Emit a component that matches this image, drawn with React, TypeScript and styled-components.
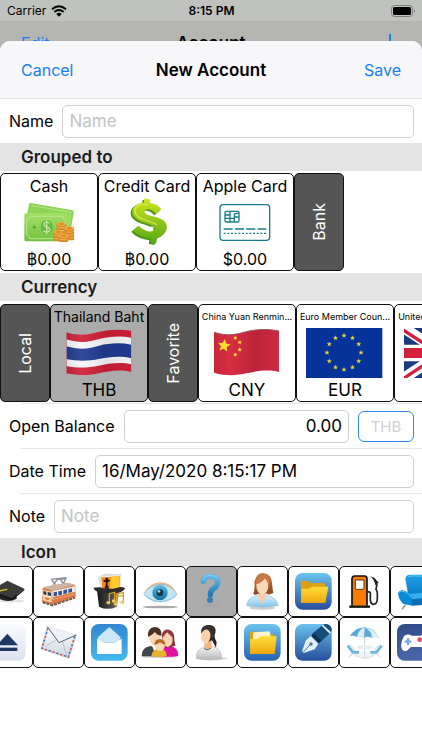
import React from "react";
import styled, { createGlobalStyle } from "styled-components";

const GlobalStyle = createGlobalStyle`
  * { box-sizing: border-box; }
  body { margin: 0; background: #fff; overflow-x: hidden; }
  body, button, input { font-family: Inter, "Liberation Sans", sans-serif; color: #000; }
  button { padding: 0; cursor: pointer; }
`;

const Screen = styled.main`
  display: flex;
  flex-direction: column;
  min-height: 100vh;
  overflow: hidden;
  background: #b4b5b1;
  font-size: 16px;
`;

const StatusBar = styled.div`
  display: grid;
  grid-template-columns: 1fr auto 1fr;
  align-items: center;
  height: 21px;
  padding: 0 6px 0 7px;
  background: #c0c2bf;
  font-size: 12px;
`;

const Carrier = styled.span`
  display: flex;
  align-items: center;
  gap: 5px;
`;

const Clock = styled.span`
  font-weight: 600;
`;

const Battery = styled.svg`
  justify-self: end;
`;

const Bar = styled.header<{ $height: number }>`
  display: grid;
  grid-template-columns: 1fr auto 1fr;
  align-items: center;
  flex: none;
  height: ${(p) => p.$height}px;
  padding: 0 21px;
`;

const BarTitle = styled.h1`
  margin: 0;
  font-size: 17px;
  font-weight: 600;
`;

const BarButton = styled.button<{ $end?: boolean }>`
  justify-self: ${(p) => (p.$end ? "end" : "start")};
  display: flex;
  border: 0;
  background: none;
  color: #157efb;
  font-size: 16px;
`;

const Sheet = styled.section`
  position: relative;
  flex: 1;
  margin-top: -24px;
  border-radius: 10px 10px 0 0;
  overflow: hidden;
  background: #fff;
`;

const SheetTop = styled.div`
  background: #f7f6f8;
  border-bottom: 1px solid #e3e2e4;
`;

const SectionTitle = styled.h2`
  display: flex;
  align-items: center;
  height: 28px;
  margin: 0;
  padding: 0 21px;
  background: #e4e4e4;
  color: #1c1c1c;
  font-size: 17px;
  font-weight: 600;
`;

const Row = styled.div`
  display: flex;
  align-items: center;
  gap: 9px;
  height: 44px;
  padding: 0 8px 0 9px;
`;

const Divider = styled.hr`
  height: 1px;
  margin: 0 0 0 21px;
  border: 0;
  background: #e6e6e6;
`;

const Field = styled.input<{ $right?: boolean }>`
  flex: 1;
  min-width: 0;
  height: 33px;
  padding: 0 6px 1px;
  border: 1px solid #cfcfcf;
  border-radius: 5px;
  background: #fff;
  font-size: 17px;
  text-align: ${(p) => (p.$right ? "right" : "left")};
  &::placeholder { color: #c4c4c6; opacity: 1; }
`;

const UnitButton = styled.button`
  width: 56px;
  height: 31px;
  border: 1px solid #2f88f3;
  border-radius: 6px;
  background: #fff;
  color: #d2d2d4;
  font-size: 15px;
`;

const Strip = styled.div`
  display: flex;
  padding: 2px 0;
  overflow: hidden;
`;

const CurrencyStrip = styled(Strip)`
  padding: 3px 0 1px;
`;

const CardBox = styled.button<{ $selected?: boolean }>`
  display: grid;
  grid-template-rows: 23px 50px 23px;
  align-items: center;
  justify-items: center;
  flex: none;
  width: 98px;
  border: 1px solid #111;
  border-radius: 5px;
  background: ${(p) => (p.$selected ? "#ababab" : "#fff")};
`;

const CardName = styled.span<{ $size: number }>`
  font-size: ${(p) => p.$size}px;
  white-space: nowrap;
`;

const CardValue = styled.span<{ $code?: boolean }>`
  font-size: ${(p) => (p.$code ? 17 : 16)}px;
`;

const GroupTab = styled.button`
  display: flex;
  align-items: center;
  justify-content: center;
  flex: none;
  width: 50px;
  border: 1px solid #111;
  border-radius: 5px;
  background: #555;
  color: #fff;
  font-size: 16px;
`;

const Upright = styled.span`
  writing-mode: vertical-rl;
  transform: rotate(180deg);
`;

const IconGrid = styled.div`
  display: grid;
  grid-template-columns: repeat(9, 51px);
  margin-left: -18px;
`;

const IconCell = styled.button<{ $selected?: boolean }>`
  display: flex;
  height: 51px;
  border: 1px solid #111;
  border-radius: 5px;
  background: ${(p) => (p.$selected ? "#ababab" : "#fff")};
`;

const Art = ({ children }: { children: React.ReactNode }) => (
  <svg width="96" height="50" viewBox="0 0 288 150" aria-hidden="true">{children}</svg>
);

type GradProps = { id: string; from: string; to: string; flat?: boolean };
const Grad = ({ id, from, to, flat }: GradProps) => (
  <linearGradient id={id} x1="0" y1="0" x2={flat ? 1 : 0} y2={flat ? 0 : 1}>
    <stop offset="0" stopColor={from} />
    <stop offset="1" stopColor={to} />
  </linearGradient>
);

const starPoints = (cx: number, cy: number, r: number, turn = 0) =>
  Array.from({ length: 10 }, (_, i) => {
    const a = ((i * 36 - 90 + turn) * Math.PI) / 180;
    const d = i % 2 ? r * 0.45 : r;
    return `${(cx + d * Math.cos(a)).toFixed(1)},${(cy + d * Math.sin(a)).toFixed(1)}`;
  }).join(" ");

const Coins = ({ x, y, n }: { x: number; y: number; n: number }) => (
  <g>
    {Array.from({ length: n }, (_, i) => (
      <g key={i}>
        <rect x={x - 15} y={y - i * 9} width="30" height="10" rx="5" fill="#d98427" />
        <path d={`M${x - 11} ${y + 3 - i * 9}h22`} stroke="#f2b65c" strokeWidth="3" />
      </g>
    ))}
    <ellipse cx={x} cy={y + 1 - (n - 1) * 9} rx="14" ry="6" fill="#f0a942" />
    <ellipse cx={x} cy={y + 1 - (n - 1) * 9} rx="8" ry="3" fill="#dc8524" />
  </g>
);

const CashArt = () => (
  <Art>
    <defs><Grad id="note" from="#a5df68" to="#72c13f" /></defs>
    <path d="M85 19Q88 17 93 19L216 40Q219 42 218 47L206 116L70 90Z" fill="#8ed456" />
    <path d="M92 26L209 46L199 102" fill="none" stroke="#b4e585" strokeWidth="3" />
    <rect x="70" y="49" width="131" height="84" rx="5" fill="url(#note)" />
    <path d="M86 58H186Q186 68 194 69V113Q186 114 185 125H86Q85 114 77 113V69Q86 68 86 58Z" fill="none" stroke="#b9e68f" strokeWidth="3" />
    <ellipse cx="137" cy="90" rx="18" ry="21" fill="#67b83f" />
    <path d="M146 79Q138 72 130 78Q125 86 137 90Q151 94 144 103Q136 108 127 101M137 69V111" fill="none" stroke="#c4e8a0" strokeWidth="4" />
    <path d="M100 85l6 6-6 6-6-6z" fill="#5ba536" />
    <Coins x={181} y={107} n={4} />
    <Coins x={172} y={122} n={3} />
    <Coins x={205} y={120} n={4} />
    <Coins x={187} y={125} n={2} />
  </Art>
);

const DollarArt = () => (
  <Art>
    <defs><Grad id="dollar" from="#cfe51b" to="#55a914" /></defs>
    {[{ dx: -5, dy: 4, c: "#4b9416" }, { dx: 0, dy: 0, c: "url(#dollar)" }].map((l) => (
      <path
        key={l.dx}
        transform={`translate(${l.dx} ${l.dy})`}
        fill={l.c}
        d="M136 4L154 8L152 18C169 20 183 28 187 37L171 51C164 42 155 37 147 37C138 37 134 42 138 48C146 59 188 58 200 77C211 98 194 118 175 121L171 140L154 136L156 125C132 123 112 113 102 100L119 86C131 98 147 105 157 103C169 101 172 93 164 88C148 78 108 75 101 51C96 31 112 18 134 17Z"
      />
    ))}
    <path d="M146 23C126 17 108 28 108 43C111 68 145 66 174 83" fill="none" stroke="#e4f067" strokeWidth="4" opacity=".7" />
    <path d="M143 38L148 53L139 49ZM155 87L166 91L159 102Z" fill="#fff" opacity=".8" />
  </Art>
);

const ChipCardArt = () => (
  <Art>
    <g fill="none" stroke="#187d89" strokeWidth="4">
      <rect x="69" y="23" width="149" height="107" rx="10" />
      <g strokeWidth="4">
        <rect x="84" y="43" width="42" height="32" rx="4" />
        <path d="M84 54H99M84 64H99M99 43V75M112 75V54Q112 49 118 49H126M112 60H126M99 64H112" />
      </g>
      <path d="M80 96H208" strokeDasharray="27 7" />
      <path d="M80 109H208" strokeDasharray="6 5" />
    </g>
  </Art>
);

const ThaiFlag = () => (
  <Art>
    <defs>
      <clipPath id="thai"><path d="M46 13C92 27 118 18 145 11S207 3 241 8V132C207 123 169 130 143 136S85 144 46 136Z" /></clipPath>
      <linearGradient id="fold">
        <stop offset="0" stopColor="#000" stopOpacity=".12" />
        <stop offset=".25" stopColor="#fff" stopOpacity=".08" />
        <stop offset=".6" stopColor="#000" stopOpacity=".08" />
        <stop offset="1" stopColor="#000" stopOpacity=".03" />
      </linearGradient>
    </defs>
    <g clipPath="url(#thai)">
      <rect x="40" width="210" height="150" fill="#cf1f36" />
      <path d="M46 34C92 48 118 40 145 33S207 23 241 29V109C207 101 169 108 143 113S85 122 46 114Z" fill="#f7f7f9" />
      <path d="M46 55C92 68 118 60 145 53S207 43 241 50V91C207 82 169 88 143 93S85 101 46 93Z" fill="#203b91" />
      <rect x="40" width="210" height="150" fill="url(#fold)" />
    </g>
  </Art>
);

const ChinaFlag = () => (
  <Art>
    <defs>
      <linearGradient id="china">
        <stop offset="0" stopColor="#cb2638" />
        <stop offset=".25" stopColor="#d62f43" />
        <stop offset=".65" stopColor="#bd2339" />
        <stop offset="1" stopColor="#d02942" />
      </linearGradient>
    </defs>
    <path d="M45 13C90 27 115 18 142 11S205 2 240 9V132C205 123 169 130 142 136S84 145 45 134Z" fill="url(#china)" />
    <path d="M45 13C90 27 115 18 142 11S205 2 240 9" fill="none" stroke="#96545c" strokeWidth="3" />
    <g fill="#fde12d">
      <polygon points={starPoints(75, 53, 20, 8)} />
      <polygon points={starPoints(109, 30, 7, 20)} />
      <polygon points={starPoints(122, 43, 7, 10)} />
      <polygon points={starPoints(122, 65, 7)} />
      <polygon points={starPoints(109, 80, 7, 15)} />
    </g>
  </Art>
);

const EuroFlag = () => (
  <Art>
    <rect x="27" width="229" height="150" fill="#053399" />
    {Array.from({ length: 12 }, (_, i) => (
      <polygon
        key={i}
        fill="#e6ce3e"
        points={starPoints(141 + 51 * Math.sin((i * Math.PI) / 6), 74 - 51 * Math.cos((i * Math.PI) / 6), 8)}
      />
    ))}
  </Art>
);

const BritishFlag = () => (
  <Art>
    <svg x="27" y="0" width="229" height="150" viewBox="0 0 229 150">
      <rect width="229" height="150" fill="#1b3a83" />
      <path d="M0 0L229 150M0 150L229 0" stroke="#fff" strokeWidth="32" />
      <path d="M-4 5L115 83M115 75L233 153M-4 153L115 75M115 67L233 -11" stroke="#d31f3b" strokeWidth="10" />
      <path d="M114 0V150M0 75H229" stroke="#fff" strokeWidth="50" />
      <path d="M114 0V150M0 75H229" stroke="#d31f3b" strokeWidth="30" />
    </svg>
  </Art>
);

const Tile = ({ id, from, to }: { id: string; from: string; to: string }) => (
  <>
    <defs><Grad id={id} from={from} to={to} /></defs>
    <rect x="21" y="21" width="110" height="110" rx="23" fill={`url(#${id})`} />
  </>
);

const GraduationCap = () => (
  <>
    <ellipse cx="88" cy="105" rx="38" ry="5" fill="#e4e4e4" />
    <path d="M50 78V98Q78 112 104 98V78Z" fill="#252525" />
    <path d="M76 44L127 68L90 97L24 74Z" fill="#3b3b3b" />
    <path d="M24 74L90 97L127 68V73L90 103L24 79Z" fill="#151515" />
    <path d="M76 70L44 76L38 92" fill="none" stroke="#d3c12b" strokeWidth="4" />
  </>
);

const Train = () => (
  <>
    <path d="M56 42L68 56M60 56L74 40L98 38L92 52M54 40L100 35M82 40L92 54" fill="none" stroke="#8a8f95" strokeWidth="4" />
    <path d="M28 70Q29 64 38 62L104 50L124 56Q129 60 128 66V94L58 117L27 108Z" fill="#dc7b45" />
    <path d="M32 65L40 61L104 50L124 57L58 74Z" fill="#cdb5a6" />
    <path d="M58 75L128 60V84L58 101Z" fill="#f1e8e2" />
    <path d="M62 79L72 77V89L62 91ZM76 76L87 74V86L76 88ZM91 73L102 70V82L91 85ZM106 70L117 67V78L106 81Z" fill="#3454a0" />
    <path d="M60 97L127 80" stroke="#e07a3e" strokeWidth="6" />
    <path d="M28 72L56 77V98L27 91Z" fill="#f6dfc5" />
    <path d="M31 75L40 77V87L31 85ZM44 78L54 80V90L44 88Z" fill="#30384f" />
    <path d="M28 100L57 107" fill="none" stroke="#f6e3cf" strokeWidth="4" />
    <path d="M29 109L58 118L126 95" fill="none" stroke="#6b5a52" strokeWidth="6" strokeDasharray="9 3" />
    <circle cx="33" cy="96" r="3" fill="#fff3a2" />
    <circle cx="51" cy="101" r="3" fill="#fff3a2" />
  </>
);

const MagicHat = () => (
  <>
    <defs><Grad id="hat" from="#171717" to="#686868" flat /></defs>
    <path d="M42 34L62 23L112 24L110 60L50 70Z" fill="#d5dbe0" />
    <path d="M50 33L109 29L108 68L54 72Z" fill="#f08a12" stroke="#f4efe6" strokeWidth="3" />
    <path d="M80 33L106 31V66H78Z" fill="#ffcb2c" />
    <path d="M59 43Q67 50 77 42M68 42V60M63 72L68 56L74 72" stroke="#241109" strokeWidth="5" fill="none" />
    <circle cx="68" cy="39" r="4" fill="#241109" />
    <path d="M39 73L45 122Q72 135 98 122L105 73Z" fill="url(#hat)" />
    <path d="M28 65Q50 62 56 66Q76 72 100 65Q112 61 123 66Q120 82 74 84Q31 81 28 65Z" fill="#2b2b2b" />
    <path d="M76 109V83L92 79V104M98 113V84L118 80V108M98 92L118 88" fill="none" stroke="#d9a127" strokeWidth="4" />
    <g fill="#f1c65c"><ellipse cx="73" cy="110" rx="6" ry="5" /><ellipse cx="89" cy="105" rx="6" ry="5" /><ellipse cx="95" cy="114" rx="6" ry="5" /><ellipse cx="115" cy="109" rx="6" ry="5" /></g>
  </>
);

const Eye = () => (
  <>
    <defs><Grad id="lens" from="#5dbde5" to="#126e9f" /></defs>
    <ellipse cx="76" cy="123" rx="53" ry="4" fill="#a9a9a9" />
    <path d="M25 82Q50 45 80 49Q111 51 126 84Q102 55 76 57Q47 57 25 82Z" fill="#e9b98b" />
    <path d="M26 83Q45 56 77 55Q109 56 126 85Q106 107 76 107Q44 106 26 83Z" fill="#c3e4f1" />
    <path d="M26 83Q45 56 77 55Q109 56 126 85" fill="none" stroke="#8fa9b0" strokeWidth="2" />
    <path d="M28 85Q46 106 76 107Q107 106 125 86" fill="none" stroke="#8cc7dc" strokeWidth="4" />
    <circle cx="75" cy="80" r="23" fill="url(#lens)" />
    <circle cx="75" cy="80" r="10" fill="#103849" />
    <circle cx="72" cy="76" r="4" fill="#8ed8f1" />
  </>
);

const Question = () => (
  <>
    <defs><Grad id="question" from="#65b9e9" to="#2778b5" /></defs>
    <ellipse cx="75" cy="118" rx="28" ry="3" fill="#a1a3a5" />
    <path d="M52 47Q54 31 73 31Q96 31 95 50Q94 61 82 68Q73 74 73 86" fill="none" stroke="url(#question)" strokeWidth="16" strokeLinecap="round" />
    <path d="M50 43Q57 28 73 28Q88 27 95 40" fill="none" stroke="#86cff3" strokeWidth="3" />
    <circle cx="72" cy="102" r="9" fill="#347fb8" />
  </>
);

const Woman = () => (
  <>
    <defs><Grad id="blouse" from="#d7f1fc" to="#86c4e9" /><Grad id="bob" from="#c87843" to="#8b4522" /></defs>
    <ellipse cx="76" cy="126" rx="38" ry="5" fill="#ccc" />
    <path d="M29 119Q31 95 58 89L76 97L95 89Q120 96 123 119Q76 127 29 119Z" fill="url(#blouse)" stroke="#8bbddd" strokeWidth="2" />
    <path d="M65 78H88V93L77 115L62 92Z" fill="#f7cda7" />
    <path d="M49 84Q55 65 52 49Q58 21 78 21Q104 23 105 52Q107 72 109 81Q92 89 88 82L64 83Q55 89 49 84Z" fill="url(#bob)" />
    <ellipse cx="76" cy="60" rx="18" ry="25" fill="#fad9b7" />
    <path d="M55 55Q72 53 85 36Q91 51 98 56Q102 26 77 25Q55 28 55 55Z" fill="#c97b47" />
  </>
);

const Folder = ({ paper }: { paper?: boolean }) => {
  const id = paper ? "folderB" : "folderA";
  return (
    <>
      <Tile id={id} from={paper ? "#6cc2ec" : "#6cc4ef"} to={paper ? "#2862b4" : "#294f9b"} />
      <defs><Grad id={`${id}y`} from="#ffdc37" to="#eea811" /></defs>
      <path d="M38 48Q38 44 43 44H60L67 51H107Q112 51 112 57V110H40Z" fill="#dea012" />
      {paper && <path d="M49 46L98 43L104 76H47Z" fill="#fff0cf" />}
      <path d={paper ? "M39 66H61L70 58H119L113 111H39Z" : "M41 68H63L72 62H121L112 110H38Z"} fill={`url(#${id}y)`} />
    </>
  );
};

const FuelPump = () => (
  <>
    <path d="M39 119V38Q40 30 47 30H77Q84 30 84 38V119" fill="#f57c05" stroke="#17120d" strokeWidth="5" />
    <path d="M31 122H93" stroke="#17120d" strokeWidth="7" />
    <rect x="49" y="42" width="26" height="28" rx="3" fill="#fff" stroke="#4d341d" strokeWidth="3" />
    <path d="M86 78Q97 75 94 90Q92 113 102 115Q115 116 115 97V82Q115 76 111 70L114 54" fill="none" stroke="#202020" strokeWidth="5" />
    <path d="M94 31L106 35L119 50L109 58Q107 42 94 31Z" fill="#202020" />
  </>
);

const Sofa = () => (
  <>
    <defs><Grad id="sofa" from="#1f9fe6" to="#0b78c6" /></defs>
    <path d="M46 117L36 130M118 117L124 130" stroke="#999" strokeWidth="5" />
    <path d="M46 38Q48 26 60 26H108Q120 28 121 41L124 95H56Z" fill="url(#sofa)" />
    <path d="M56 84L120 78L128 98L66 110Z" fill="#37aeee" />
    <path d="M24 80Q30 68 46 75Q62 82 66 94L68 119L40 114Q25 100 24 80Z" fill="#0a8bd8" />
    <path d="M65 100L134 92V114L66 119Z" fill="#0b6db5" />
    <path d="M26 80Q33 71 46 78Q60 84 63 94M54 32Q60 28 107 31" fill="none" stroke="#66c8f6" strokeWidth="3" />
  </>
);

const Eject = () => (
  <>
    <Tile id="eject" from="#fafbff" to="#dbe1ee" />
    <path d="M76 50L108 85H44Z" fill="#203763" />
    <path d="M46 97H106" stroke="#203763" strokeWidth="10" />
  </>
);

const AirMail = () => (
  <>
    <defs><Grad id="mail" from="#fff" to="#cdd6e0" /></defs>
    <path d="M43 29L130 54L108 124L24 96Z" fill="url(#mail)" stroke="#c3c9cf" strokeWidth="2" />
    <path d="M45 33L27 94L106 120L126 56" fill="none" stroke="#cf5f5f" strokeWidth="5" strokeDasharray="8 16" />
    <path d="M45 33L27 94L106 120L126 56" fill="none" stroke="#4980b7" strokeWidth="5" strokeDasharray="8 16" strokeDashoffset="12" />
    <path d="M34 90L68 70M100 113L88 72" fill="none" stroke="#a6adb4" strokeWidth="2" />
    <path d="M43 29L130 54L78 77Z" fill="#edf1f5" />
    <path d="M43 29L78 77L130 54" fill="none" stroke="#59616a" strokeWidth="3" />
  </>
);

const OpenMail = () => (
  <>
    <Tile id="openmail" from="#3386cf" to="#43b9ed" />
    <path d="M76 30L110 61Q110 67 103 71L87 77H65L48 71Q39 66 42 60Z" fill="#cbe7f8" />
    <path d="M39 65L62 77H90L113 65V111H39Z" fill="#fff" />
  </>
);

const Family = () => (
  <>
    <ellipse cx="75" cy="119" rx="54" ry="4" fill="#ccc" />
    <path d="M20 118Q19 91 46 87L70 92L74 118Z" fill="#41464c" />
    <path d="M51 86L62 113L68 88Z" fill="#fff" />
    <path d="M77 118L80 91L107 87Q130 92 130 116Q104 122 77 118Z" fill="#dc149e" />
    <path d="M75 87Q87 65 80 54Q86 36 101 38Q120 42 118 70L121 86Q92 96 75 87Z" fill="#852b38" />
    <ellipse cx="60" cy="60" rx="17" ry="25" fill="#f8d5b2" />
    <path d="M39 60Q36 34 58 30Q82 30 79 56Q64 54 60 45Q50 55 39 60Z" fill="#4b3025" />
    <ellipse cx="98" cy="68" rx="15" ry="22" fill="#f9d5b4" />
    <path d="M80 63Q88 57 96 45Q107 58 116 62Q112 38 97 39Q82 42 80 63Z" fill="#933840" />
    <path d="M49 117Q51 97 75 94Q97 99 95 118Q72 123 49 117Z" fill="#e6b22b" />
    <ellipse cx="75" cy="85" rx="15" ry="17" fill="#fad9b9" />
    <path d="M58 84Q59 66 75 66Q92 68 91 85Q78 79 75 76Q67 83 58 84Z" fill="#b36b23" />
  </>
);

const Ponytail = () => (
  <>
    <defs><Grad id="shirt" from="#f4f4f4" to="#b7b7b7" /></defs>
    <ellipse cx="82" cy="124" rx="42" ry="6" fill="#ddd" />
    <path d="M31 125Q29 95 55 91L81 89Q108 95 107 125Q69 133 31 125Z" fill="url(#shirt)" stroke="#bbb" strokeWidth="2" />
    <path d="M55 79L77 70V93Q62 104 54 90Z" fill="#eeb886" />
    <path d="M48 42Q52 22 73 24Q93 29 88 48Q82 59 92 75L90 92Q84 82 78 70L59 78Z" fill="#282626" />
    <path d="M46 54Q48 36 65 37Q80 41 73 62Q68 80 57 80Q42 74 46 54Z" fill="#f9d1aa" />
    <path d="M45 50Q44 25 65 24Q88 25 83 60L73 67Q77 42 61 36Q50 40 45 50Z" fill="#353131" />
    <path d="M54 93Q60 103 74 94" stroke="#555" strokeWidth="3" fill="none" />
  </>
);

const Pen = () => (
  <>
    <Tile id="pen" from="#69c1ec" to="#264f9b" />
    <path d="M76 47L104 24Q114 18 125 25Q138 38 126 49L100 73Z" fill="#174d79" />
    <path d="M76 47L101 72L92 79L70 57Z" fill="#0b3156" />
    <path d="M101 26L125 50L129 46L105 23Z" fill="#dcf4ff" />
    <path d="M68 57L91 80L80 97L47 108L42 103L53 71Z" fill="#e3f0f9" />
    <path d="M45 106L68 82" stroke="#3974ab" strokeWidth="3" />
    <circle cx="69" cy="81" r="5" fill="#3974ab" />
  </>
);

const Terrace = () => (
  <>
    <ellipse cx="75" cy="112" rx="44" ry="9" fill="#f1f3f4" />
    <path d="M77 34V119M66 123H90" stroke="#c9d6de" strokeWidth="3" />
    <path d="M77 31Q108 34 120 62Q109 57 98 63Q86 56 75 62Q63 54 53 60Q43 54 33 58Q46 33 77 31Z" fill="#5ba9d5" />
    <path d="M77 31Q60 37 53 60Q62 56 75 62ZM77 31Q100 43 98 63Q110 57 120 62Q107 35 77 31Z" fill="#dceff8" />
    <ellipse cx="77" cy="91" rx="24" ry="6" fill="#e6ebee" />
    <g fill="none" strokeWidth="8">
      <path d="M26 86L42 106H60M128 86L112 106H94" stroke="#6db5d9" />
      <path d="M34 84L48 101M120 84L106 101" stroke="#cfe6f2" strokeWidth="4" />
    </g>
    <path d="M41 109L29 121M47 109L60 121M113 109L125 121M107 109L94 121" stroke="#c3d4dd" strokeWidth="3" />
  </>
);

const GamePad = () => (
  <>
    <Tile id="gamepad" from="#304b87" to="#4b68aa" />
    <path d="M42 57Q55 49 65 56H91Q103 49 115 57Q130 87 116 101Q106 106 94 90H62Q49 108 38 100Q27 85 42 57Z" fill="#fff" />
    <path d="M54 64V84M44 74H64" stroke="#71a7e7" strokeWidth="7" />
    <circle cx="89" cy="68" r="7" fill="#ed425b" />
    <circle cx="105" cy="77" r="6" fill="#4f87d2" />
  </>
);

const icons: { label: string; art: React.ReactNode }[] = [
  { label: "Graduation cap", art: <GraduationCap /> },
  { label: "Train", art: <Train /> },
  { label: "Entertainment", art: <MagicHat /> },
  { label: "Eye", art: <Eye /> },
  { label: "Question", art: <Question /> },
  { label: "Woman", art: <Woman /> },
  { label: "Folder", art: <Folder /> },
  { label: "Fuel", art: <FuelPump /> },
  { label: "Sofa", art: <Sofa /> },
  { label: "Eject", art: <Eject /> },
  { label: "Air mail", art: <AirMail /> },
  { label: "Open mail", art: <OpenMail /> },
  { label: "Family", art: <Family /> },
  { label: "Girl", art: <Ponytail /> },
  { label: "Documents", art: <Folder paper /> },
  { label: "Pen", art: <Pen /> },
  { label: "Terrace", art: <Terrace /> },
  { label: "Game pad", art: <GamePad /> },
];

type CardProps = {
  name: string;
  value: string;
  art: React.ReactNode;
  size?: number;
  selected?: boolean;
  code?: boolean;
};
const Card = ({ name, value, art, size = 16, selected, code }: CardProps) => (
  <CardBox type="button" $selected={selected}>
    <CardName $size={size}>{name}</CardName>
    {art}
    <CardValue $code={code}>{value}</CardValue>
  </CardBox>
);

const Tab = ({ children }: { children: string }) => (
  <GroupTab type="button"><Upright>{children}</Upright></GroupTab>
);

export default function App() {
  return (
    <Screen>
      <GlobalStyle />
      <StatusBar>
        <Carrier>
          Carrier
          <svg width="16" height="12" viewBox="0 0 48 36" aria-hidden="true">
            <g fill="none" stroke="#000" strokeWidth="6">
              <path d="M3 13Q24 -5 45 13" />
              <path d="M10 21Q24 9 38 21" />
            </g>
            <path d="M16 27Q24 20 32 27L24 35Z" />
          </svg>
        </Carrier>
        <Clock>8:15 PM</Clock>
        <Battery width="25" height="12" viewBox="0 0 25 12" aria-hidden="true">
          <rect x="0.5" y="0.5" width="21" height="11" rx="3" fill="none" stroke="#7e807e" />
          <rect x="2" y="2" width="18" height="8" rx="1.5" />
          <path d="M23 4Q25 6 23 8Z" fill="#7e807e" />
        </Battery>
      </StatusBar>
      <Bar $height={44}>
        <BarButton type="button">Edit</BarButton>
        <BarTitle as="div">Account</BarTitle>
        <BarButton type="button" $end aria-label="Add">
          <svg width="22" height="20" viewBox="0 0 22 20" aria-hidden="true">
            <path d="M11 1V19M2 10H20" stroke="#157efb" strokeWidth="2" />
          </svg>
        </BarButton>
      </Bar>
      <Sheet>
        <SheetTop>
          <Bar $height={57}>
            <BarButton type="button">Cancel</BarButton>
            <BarTitle>New Account</BarTitle>
            <BarButton type="button" $end>Save</BarButton>
          </Bar>
        </SheetTop>
        <Row>
          <label htmlFor="name">Name</label>
          <Field id="name" placeholder="Name" />
        </Row>
        <SectionTitle>Grouped to</SectionTitle>
        <Strip>
          <Card name="Cash" value="฿0.00" art={<CashArt />} />
          <Card name="Credit Card" value="฿0.00" art={<DollarArt />} />
          <Card name="Apple Card" value="$0.00" art={<ChipCardArt />} />
          <Tab>Bank</Tab>
        </Strip>
        <SectionTitle>Currency</SectionTitle>
        <CurrencyStrip>
          <Tab>Local</Tab>
          <Card code name="Thailand Baht" value="THB" art={<ThaiFlag />} size={14} selected />
          <Tab>Favorite</Tab>
          <Card code name="China Yuan Renmin..." value="CNY" art={<ChinaFlag />} size={9} />
          <Card code name="Euro Member Coun..." value="EUR" art={<EuroFlag />} size={9} />
          <Card code name="United Kingdom Po..." value="GBP" art={<BritishFlag />} size={9} />
        </CurrencyStrip>
        <Divider />
        <Row>
          <label htmlFor="balance">Open Balance</label>
          <Field id="balance" defaultValue="0.00" $right />
          <UnitButton type="button">THB</UnitButton>
        </Row>
        <Divider />
        <Row>
          <label htmlFor="date">Date Time</label>
          <Field id="date" defaultValue="16/May/2020 8:15:17 PM" />
        </Row>
        <Divider />
        <Row>
          <label htmlFor="note">Note</label>
          <Field id="note" placeholder="Note" />
        </Row>
        <SectionTitle>Icon</SectionTitle>
        <IconGrid>
          {icons.map((icon) => (
            <IconCell key={icon.label} type="button" aria-label={icon.label} $selected={icon.label === "Question"}>
              <svg width="49" height="49" viewBox="3 3 147 147" aria-hidden="true">{icon.art}</svg>
            </IconCell>
          ))}
        </IconGrid>
      </Sheet>
    </Screen>
  );
}
